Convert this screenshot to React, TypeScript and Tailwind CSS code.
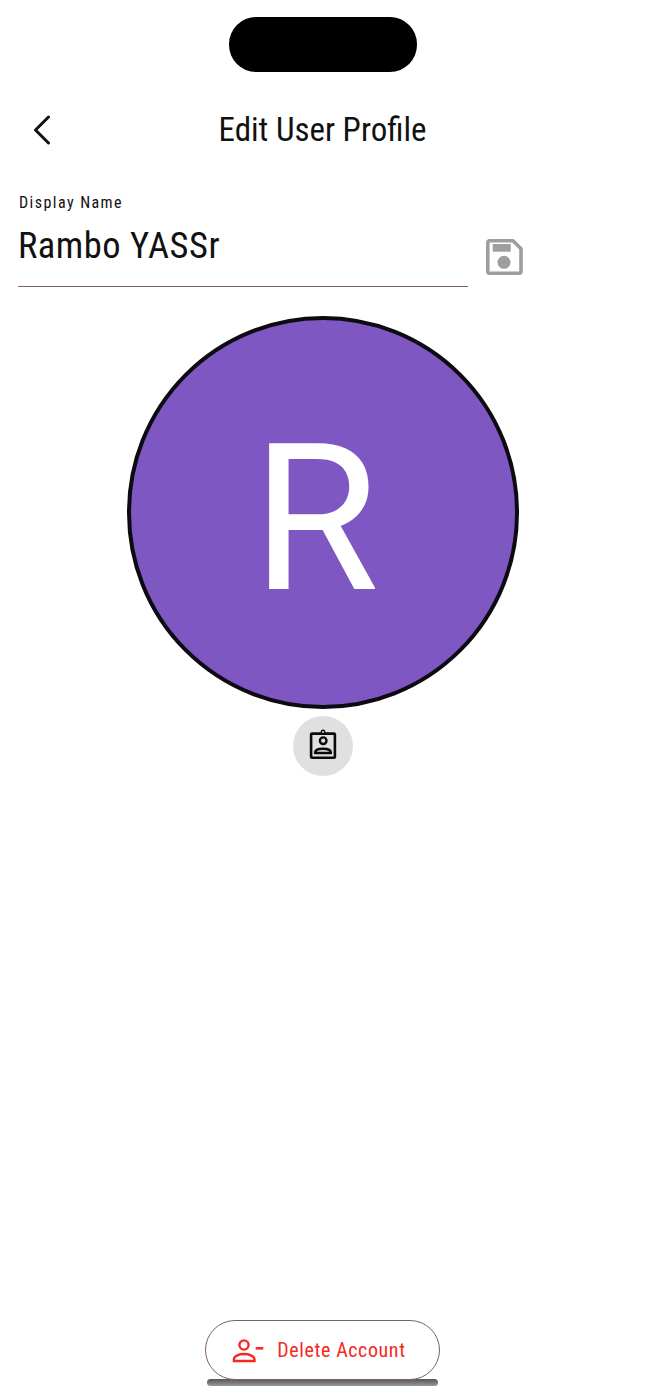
const condensed = "font-['Roboto_Condensed','Roboto',sans-serif] [font-stretch:75%]"

function Notch() {
  return (
    <div className="mt-[17px] h-[55px] w-[188px] self-center rounded-[27px] bg-black" />
  )
}

function BackIcon() {
  return (
    <svg viewBox="0 0 18 30" className="h-[30px] w-[18px]" fill="none" stroke="#111" strokeWidth="3" strokeLinecap="round" strokeLinejoin="round">
      <path d="M15.500 2 2.500 15l13 13" />
    </svg>
  )
}

function SaveIcon() {
  return (
    <svg viewBox="0 0 37 36" className="h-[36px] w-[37px]" fill="none">
      <path d="M3.500 1.800H27l8 8v22.700a1.700 1.700 0 0 1-1.700 1.700H3.500a1.700 1.700 0 0 1-1.700-1.700V3.500a1.700 1.700 0 0 1 1.700-1.700z" stroke="#9e9e9e" strokeWidth="3.600" strokeLinejoin="round" />
      <rect x="6.700" y="5" width="18" height="7.700" fill="#9e9e9e" />
      <circle cx="18" cy="23.300" r="6.500" fill="#9e9e9e" />
    </svg>
  )
}

function BadgeIcon() {
  return (
    <svg viewBox="0 0 28 34" className="h-[34px] w-[28px]" fill="none" stroke="#0a0a0a">
      <rect x="2.100" y="4.600" width="23.800" height="24.100" rx="1" strokeWidth="2.600" />
      <circle cx="14" cy="3" r="1.700" strokeWidth="1.400" fill="#e0e0e0" />
      <circle cx="14.200" cy="11.700" r="3.300" strokeWidth="2.400" />
      <path d="M6 24c0-3 4-4.200 8-4.200s8 1.200 8 4.200z" strokeWidth="2.400" strokeLinejoin="round" />
    </svg>
  )
}

function RemoveUserIcon() {
  return (
    <svg viewBox="0 0 32 26" className="h-[26px] w-[32px]" fill="none" stroke="#f4291f" strokeWidth="2.400">
      <circle cx="12" cy="8" r="4.600" />
      <path d="M1.900 24v-1.700c0-3.600 5.600-5.300 10.100-5.300s10.500 1.700 10.500 5.300V24z" />
      <path d="M23.700 11.300h7.600" strokeWidth="2.600" />
    </svg>
  )
}

export default function App() {
  return (
    <div className={`flex h-[1398px] w-[645px] flex-col overflow-hidden bg-white text-[#111] ${condensed}`}>
      <Notch />

      {/* header */}
      <div className="relative mt-[36px] flex h-[44px] items-center justify-center">
        <div className="absolute left-[33px]">
          <BackIcon />
        </div>
        <h1 className="text-[33px] leading-[44px]">Edit User Profile</h1>
      </div>

      {/* name field */}
      <div className="mt-[41px] flex items-start pl-[18px]">
        <div className="h-[94px] w-[450px] border-b border-[#7d5f66] pl-px">
          <div className="text-[16px] leading-[20px] tracking-[1.450px]">Display Name</div>
          <div className="ml-[-1px] mt-[11px] text-[36.500px] leading-[44px] tracking-[0.500px]">Rambo YASSr</div>
        </div>
        <div className="ml-[18px] mt-[46px]">
          <SaveIcon />
        </div>
      </div>

      {/* avatar */}
      <div className="mt-[29px] flex flex-col items-center">
        <div className="flex h-[393px] w-[392px] items-center justify-center rounded-full border-[4px] border-[#0d0a12] bg-[#7e57c2] pr-[14px] pt-[14px]">
          <span className="font-['Roboto',sans-serif] text-[205px] leading-none text-white [font-stretch:100%] blur-[0.6px]">R</span>
        </div>
        <div className="mt-[7px] flex h-[60px] w-[60px] items-center justify-center rounded-full bg-[#e0e0e0]">
          <BadgeIcon />
        </div>
      </div>

      {/* delete */}
      <div className="mt-auto flex flex-col items-center">
        <button className="z-10 flex h-[60px] w-[235px] items-center justify-center gap-[13px] rounded-full border border-[#7d5f66] bg-white pr-[7px] text-[20px] tracking-[0.600px] text-[#f4291f]">
          <RemoveUserIcon />
          <span>Delete Account</span>
        </button>
        <div className="mb-[12px] mt-[-1px] h-[7px] w-[231px] rounded-full bg-gradient-to-b from-[#555] to-[#999]" />
      </div>
    </div>
  )
}
